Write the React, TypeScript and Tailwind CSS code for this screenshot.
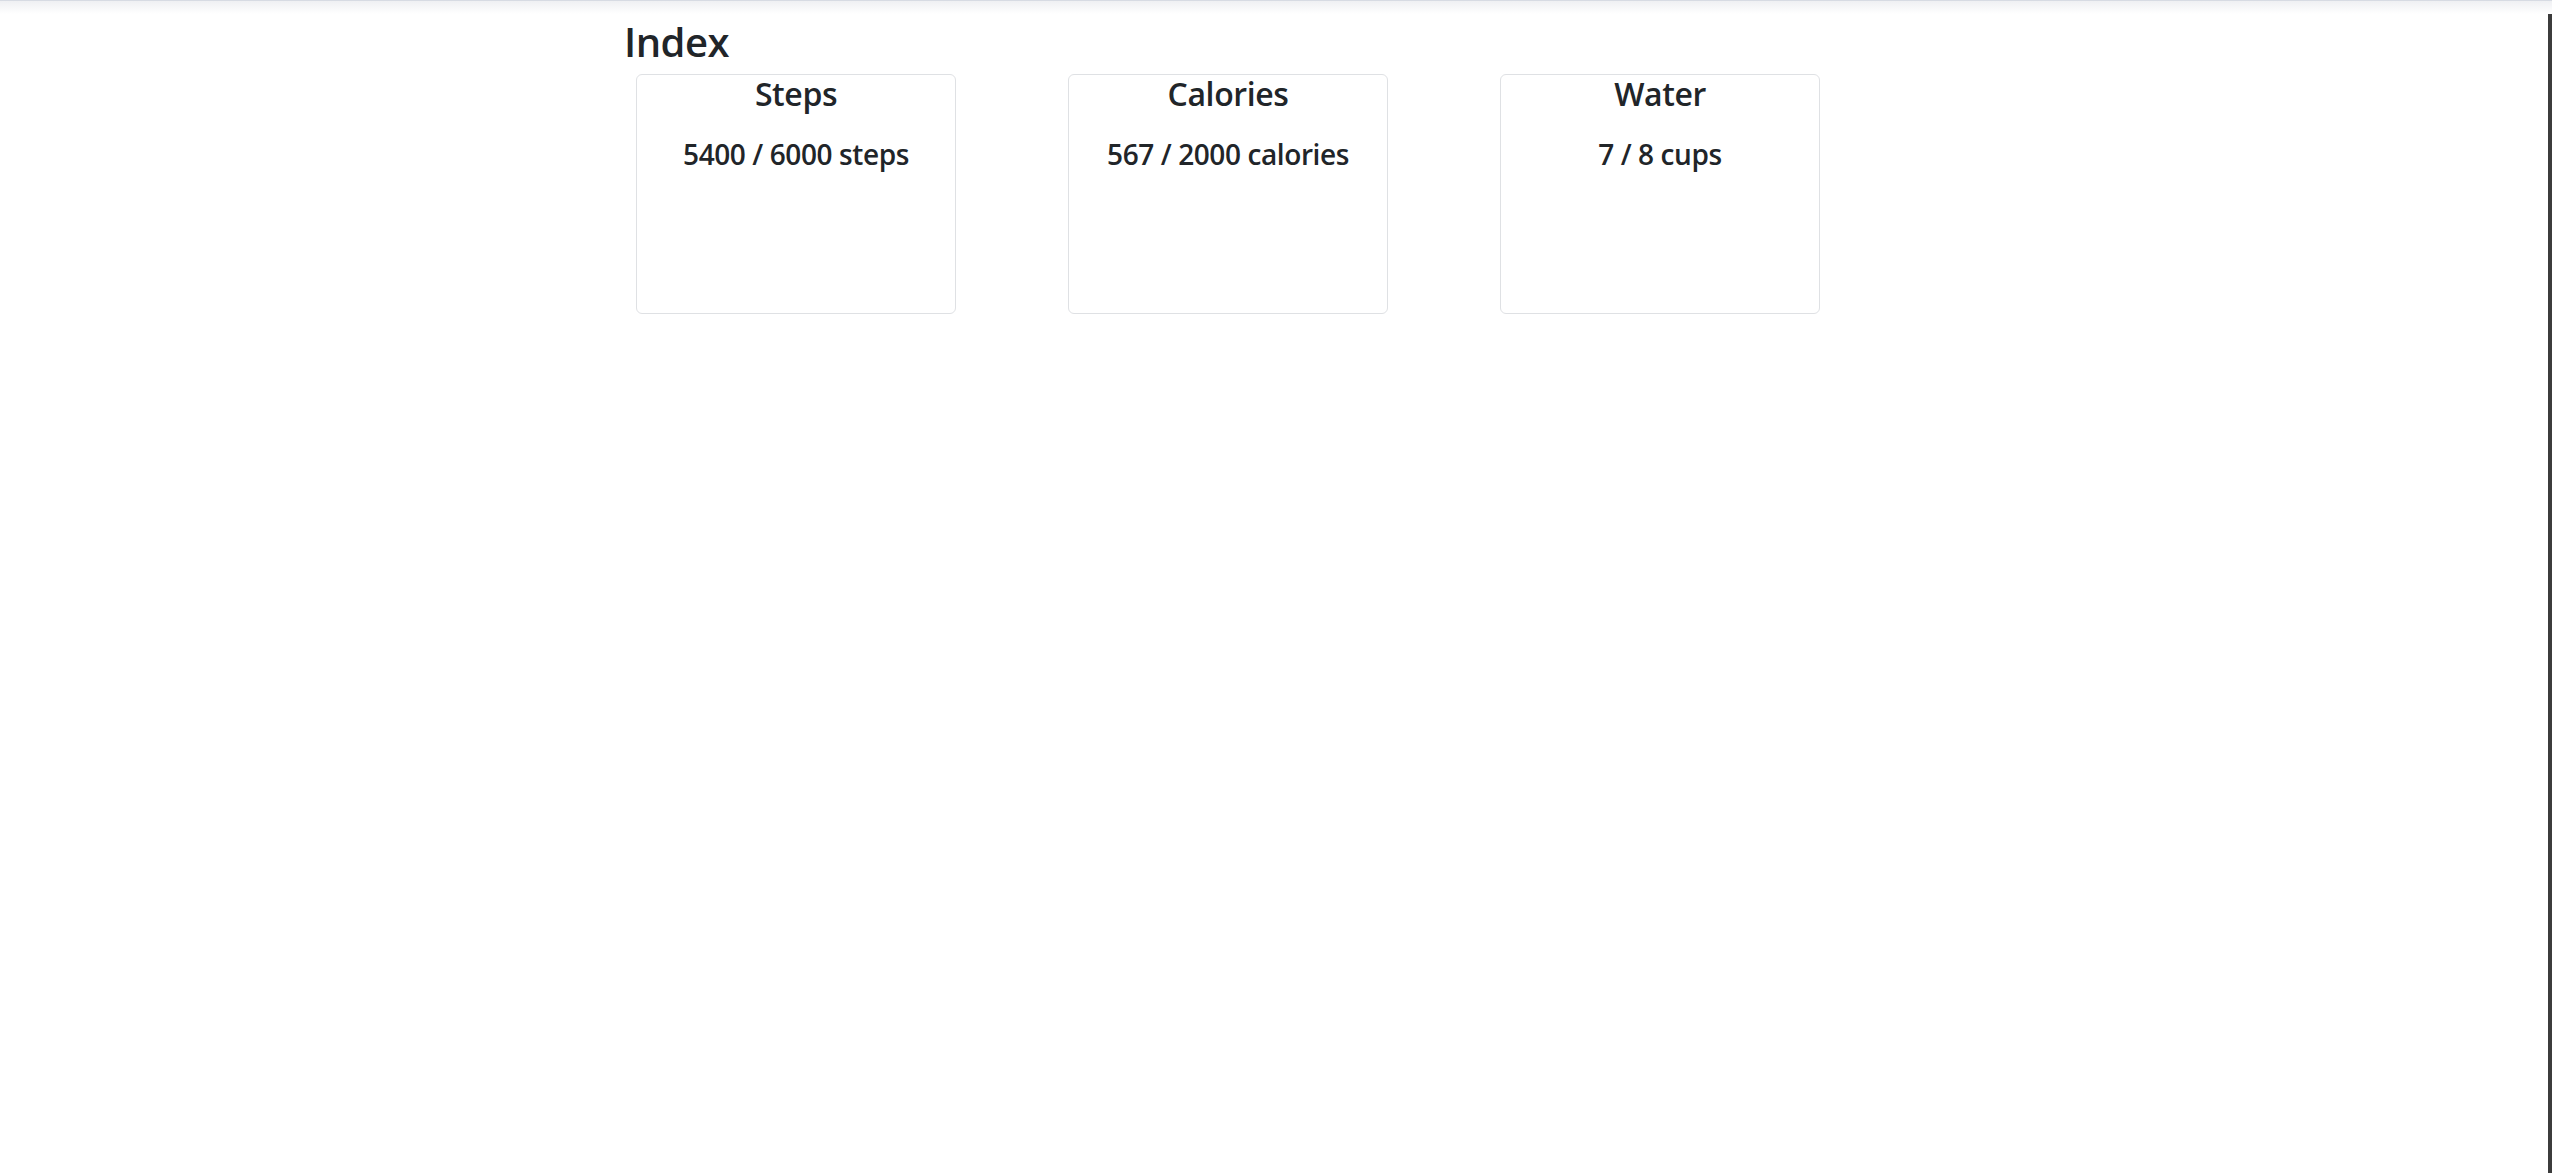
const stats = [
  { title: 'Steps', value: '5400 / 6000 steps' },
  { title: 'Calories', value: '567 / 2000 calories' },
  { title: 'Water', value: '7 / 8 cups' },
]

function StatCard({ title, value }: { title: string; value: string }) {
  return (
    <div className="w-[320px] h-[240px] border border-[#dfe1e4] rounded-[6px] bg-white text-center">
      <h2 className="text-[32px] leading-[38px] font-semibold tracking-[-0.4px]">{title}</h2>
      <h3 className="mt-6 text-[28px] leading-[34px] font-semibold tracking-[-0.4px]">{value}</h3>
    </div>
  )
}

export default function App() {
  return (
    <div
      className="relative flex min-h-screen bg-white text-[#212529]"
      style={{ fontFamily: '"Open Sans", "Noto Sans", sans-serif' }}
    >
      <div className="pointer-events-none absolute inset-x-0 top-0 h-[14px] border-t border-[#d7dbe3] bg-gradient-to-b from-[#eff0f3] to-white" />
      <main className="flex-1 pr-1">
        <div className="relative mx-auto w-[1296px] pt-[18px]">
          <h1 className="text-[40px] leading-[48px] font-semibold tracking-[-0.5px] mb-2">Index</h1>
          <div className="grid grid-cols-3">
            {stats.map((s) => (
              <div key={s.title} className="px-3">
                <StatCard title={s.title} value={s.value} />
              </div>
            ))}
          </div>
        </div>
      </main>
      <div className="w-1 bg-[#3c3c3c]" />
    </div>
  )
}
